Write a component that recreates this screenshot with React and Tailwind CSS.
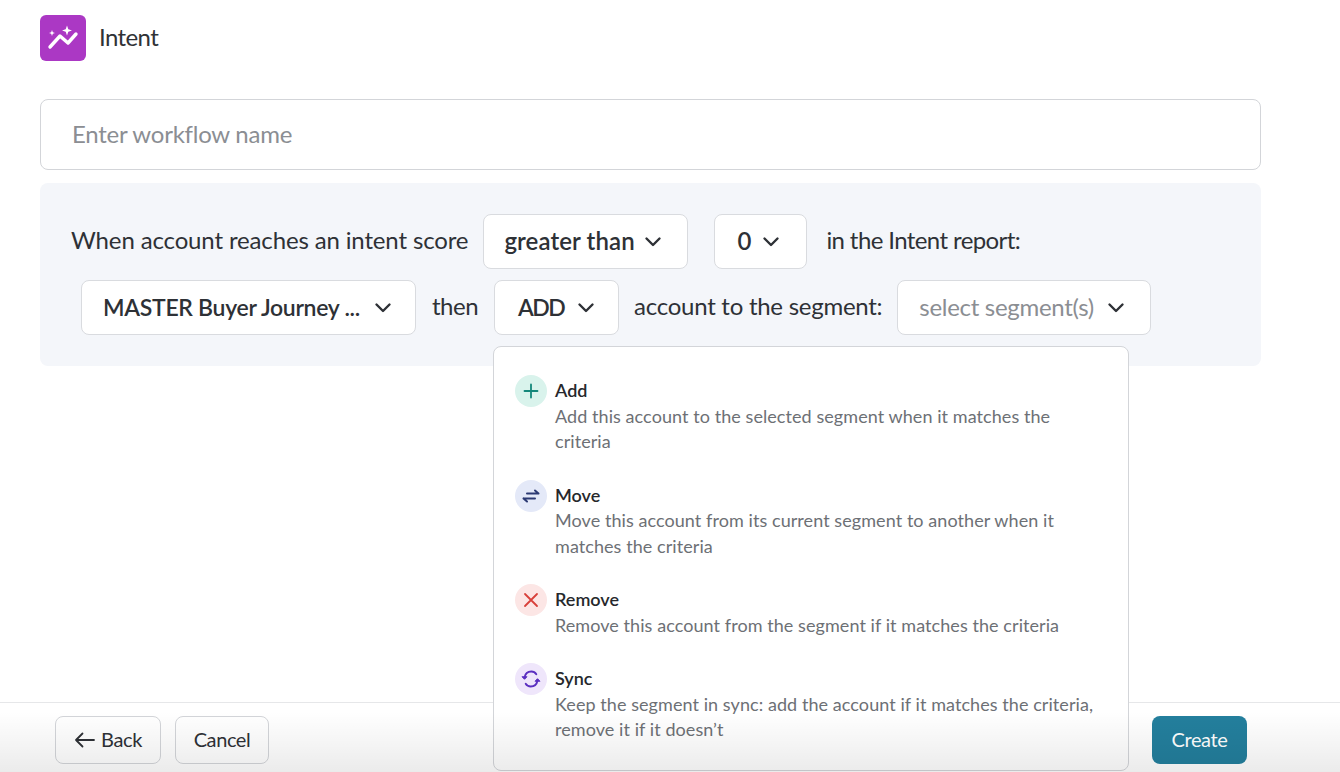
import React from "react";

const Chevron = () => (
  <svg width="18" height="18" viewBox="0 0 18 18" fill="none" stroke="currentColor" strokeWidth="2.4" strokeLinecap="round" strokeLinejoin="round" className="shrink-0">
    <path d="M2.500 5.500L9 12l6.500-6.500" />
  </svg>
);

const Select = ({ label, className, textClass = "font-semibold text-[#2e3136]", gap = "gap-[9px]" }) => (
  <div className={`h-[55px] shrink-0 bg-white border border-[#d9dbdf] rounded-lg flex items-center ${gap} ${className}`}>
    <span className={`whitespace-nowrap pb-[1px] ${textClass}`}>{label}</span>
    <span className="text-[#2e3136]"><Chevron /></span>
  </div>
);

const PlusIcon = () => (
  <svg width="16" height="16" viewBox="0 0 16 16" fill="none" stroke="#14877a" strokeWidth="1.8" strokeLinecap="round"><path d="M8 1.500v13M1.500 8h13" /></svg>
);
const MoveIcon = () => (
  <svg width="18" height="14" viewBox="0 0 18 14" fill="none" stroke="#2c3a73" strokeWidth="2" strokeLinecap="round" strokeLinejoin="round">
    <path d="M5 4.500h11.500M13 1.500l3.500 3M13 9.500H1.500M5 12.500l-3.500-3" />
  </svg>
);
const CloseIcon = () => (
  <svg width="16" height="16" viewBox="0 0 16 16" fill="none" stroke="#d8403a" strokeWidth="1.8" strokeLinecap="round"><path d="M2 2l12 12M14 2L2 14" /></svg>
);
const SyncIcon = () => (
  <svg width="20" height="20" viewBox="0 0 20 20" fill="none" stroke="#5b2fc0" strokeWidth="1.9" strokeLinecap="round" strokeLinejoin="round">
    <path d="M3.500 8.500C4.200 4.800 7 2.500 10.300 2.500c2.300 0 4 1.100 5 2.700" />
    <path d="M16.500 11.500c-.7 3.700-3.500 6-6.800 6-2.300 0-4-1.100-5-2.700" />
    <path d="M1.300 8l2.200 2.300L5.700 8z" fill="#5b2fc0" strokeWidth="1" />
    <path d="M14.300 12l2.200-2.300L18.700 12z" fill="#5b2fc0" strokeWidth="1" />
  </svg>
);

const items = [
  { title: "Add", bg: "bg-[#d9f3ec]", icon: <PlusIcon />, desc: ["Add this account to the selected segment when it matches the", "criteria"] },
  { title: "Move", bg: "bg-[#e4e9f8]", icon: <MoveIcon />, desc: ["Move this account from its current segment to another when it", "matches the criteria"] },
  { title: "Remove", bg: "bg-[#fce6e5]", icon: <CloseIcon />, desc: ["Remove this account from the segment if it matches the criteria"] },
  { title: "Sync", bg: "bg-[#efe6fb]", icon: <SyncIcon />, desc: ["Keep the segment in sync: add the account if it matches the criteria,", "remove it if it doesn’t"] },
];

export default function App() {
  return (
    <div className="relative h-[772px] w-[1340px] overflow-hidden bg-white flex flex-col font-['Lato','Noto_Sans',sans-serif] text-[#2e3136]">
      <div className="flex-1 pl-10 pr-[79px] pt-[15px]">
        <div className="flex items-center gap-[13px]">
          <div className="w-[46px] h-[46px] rounded-md bg-[#ab38c4] flex items-center justify-center">
            <svg width="46" height="46" viewBox="0 0 46 46" fill="none">
              <path d="M10 32l10-11 8 7 8-9" stroke="white" strokeWidth="3.400" strokeLinecap="round" strokeLinejoin="round" />
              <path d="M27 10.500l1.300 3.700 3.700 1.300-3.700 1.300L27 20.500l-1.300-3.700-3.700-1.300 3.700-1.300z" fill="white" />
              <path d="M12 15l.8 2.200 2.200.8-2.200.8-.8 2.200-.8-2.200L9 18l2.200-.8z" fill="white" />
            </svg>
          </div>
          <span className="text-[24px] tracking-[-0.6px] text-[#303236] pb-[2px]">Intent</span>
        </div>
        <div className="mt-[38px] h-[71px] border border-[#d3d5d9] rounded-lg flex items-center pl-[31px] text-[24px] tracking-[-0.25px] text-[#8b8e93]">
          <span className="pb-[2px]">Enter workflow name</span>
        </div>
        <div className="mt-[13px] h-[183px] bg-[#f4f6fa] rounded-lg pt-[31px] text-[24px]">
          <div className="flex items-center pl-[31px]">
            <span className="whitespace-nowrap tracking-[-0.14px] pb-[3px]">When account reaches an intent score</span>
            <Select label="greater than" className="ml-[15px] w-[205px] pl-[20px]" textClass="font-semibold text-[#2e3136] tracking-[0.1px]" />
            <Select label="0" className="ml-[26px] w-[93px] pl-[22px]" gap="gap-[11px]" />
            <span className="ml-[19px] whitespace-nowrap tracking-[-0.6px] pb-[3px]">in the Intent report:</span>
          </div>
          <div className="flex items-center pl-[41px] mt-[11px]">
            <Select label="MASTER Buyer Journey ..." className="w-[335px] pl-[21px]" gap="gap-[14px]" textClass="font-semibold text-[#2e3136] text-[23px] tracking-[-0.3px]" />
            <span className="ml-[16px] tracking-[-0.5px] pb-[3px]">then</span>
            <Select label="ADD" className="ml-[16px] w-[125px] pl-[23px]" gap="gap-[13px]" textClass="font-semibold text-[#2e3136] text-[23px] tracking-[-1.5px]" />
            <span className="ml-[15px] whitespace-nowrap tracking-[-0.26px] pb-[3px]">account to the segment:</span>
            <Select label="select segment(s)" className="ml-[15px] w-[254px] pl-[21px]" gap="gap-[13px]" textClass="text-[#8b8e93] tracking-[-0.3px]" />
          </div>
        </div>
      </div>

      <div className="h-[70px] border-t border-[#e6e7e9] flex items-start justify-between pl-[55px] pr-[93px] pt-[13px] text-[20px] tracking-[-0.4px]">
        <div className="flex gap-[14px]">
          <div className="w-[106px] h-[48px] border border-[#d3d5d9] rounded-lg flex items-center justify-center gap-[6px]">
            <svg width="21" height="16" viewBox="0 0 21 16" fill="none" stroke="#2e3136" strokeWidth="1.800" strokeLinecap="round" strokeLinejoin="round"><path d="M20 8H2M8.500 1.500L2 8l6.500 6.500" /></svg>
            <span className="pb-[3px]">Back</span>
          </div>
          <div className="w-[94px] h-[48px] border border-[#d3d5d9] rounded-lg flex items-center justify-center pb-[3px]">Cancel</div>
        </div>
        <div className="w-[95px] h-[48px] rounded-lg bg-[#237f9d] text-white flex items-center justify-center pb-[3px]">Create</div>
      </div>

      <div className="absolute left-[493px] top-[346px] w-[636px] h-[425px] bg-white border border-[#d3d5d9] rounded-lg pl-[21px] pt-[28px] pr-4">
        <div className="flex flex-col gap-[25px]">
          {items.map((it) => (
            <div key={it.title} className="flex gap-[8px]">
              <div className={`w-8 h-8 rounded-full shrink-0 flex items-center justify-center ${it.bg}`}>{it.icon}</div>
              <div className="pt-[3px] text-[18px] leading-[25.500px]">
                <div className="font-semibold text-[#26282c]">{it.title}</div>
                {it.desc.map((d) => (
                  <div key={d} className="text-[#6d7075] tracking-[0.07px] whitespace-nowrap">{d}</div>
                ))}
              </div>
            </div>
          ))}
        </div>
      </div>

      <div className="absolute left-0 right-0 bottom-0 h-[60px] pointer-events-none bg-gradient-to-b from-transparent to-[#00000014]" />
    </div>
  );
}
